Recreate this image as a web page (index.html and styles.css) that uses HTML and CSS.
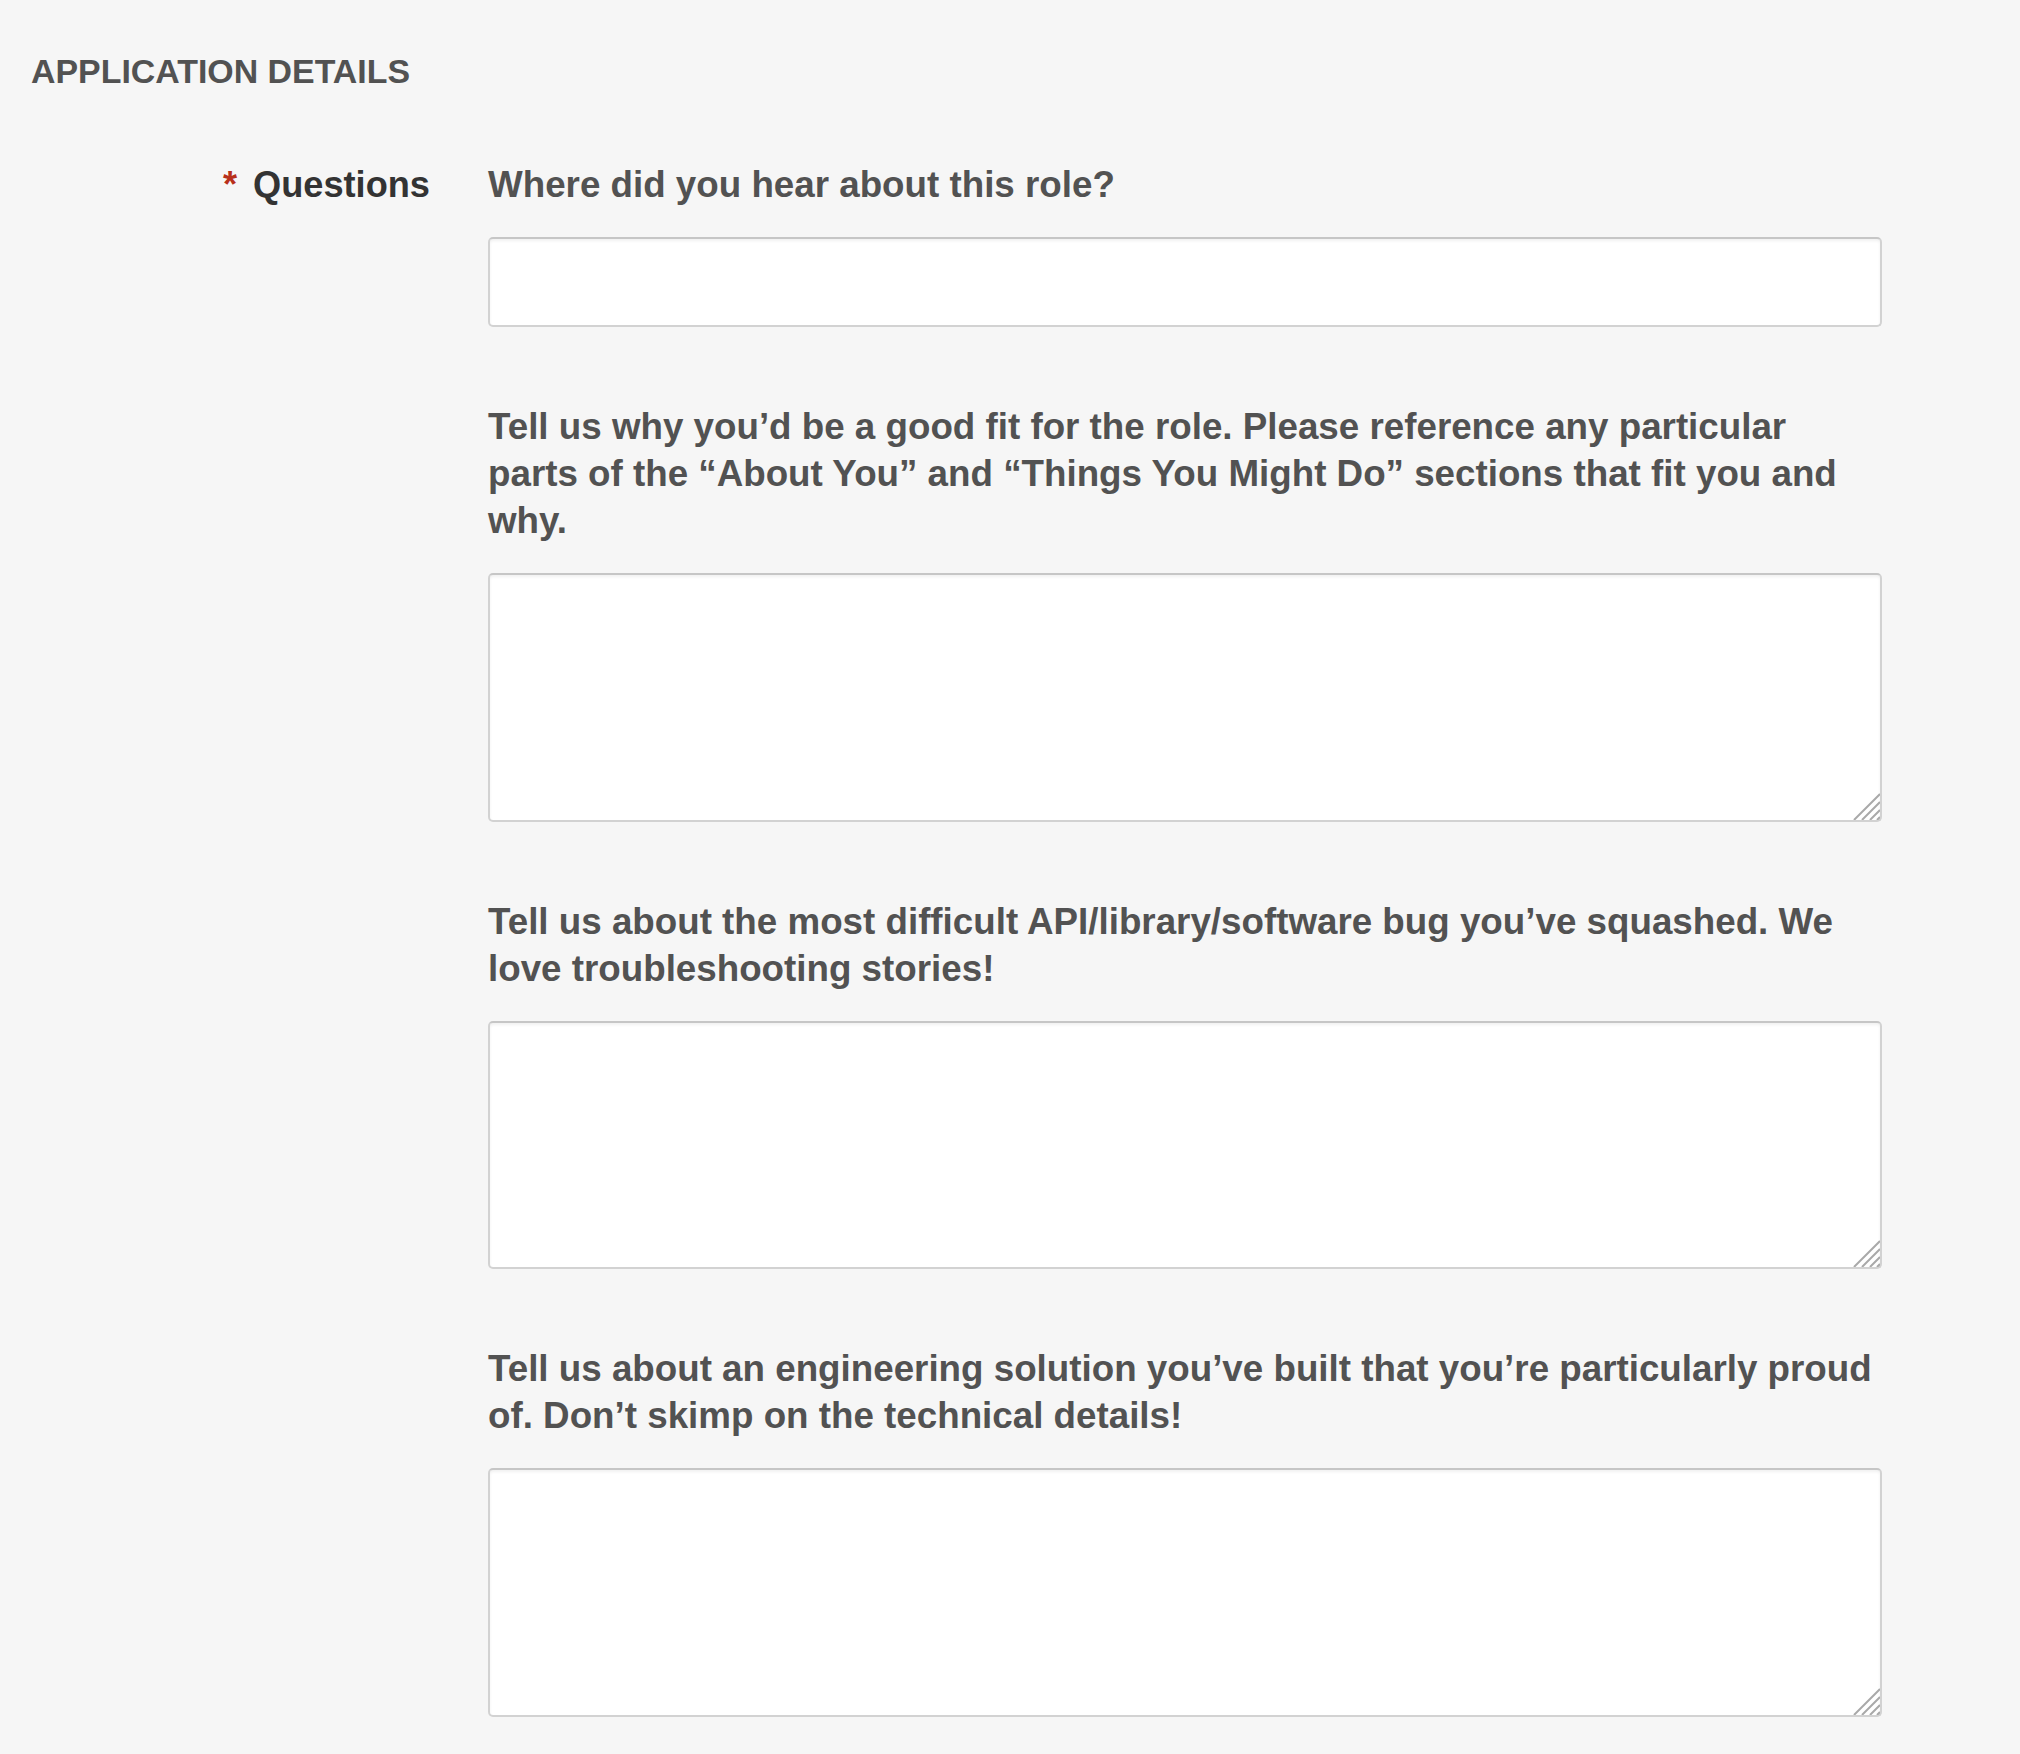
FILE: index.html
```html
<!DOCTYPE html>
<html lang="en">
<head>
    <meta charset="UTF-8">
    <title>Application Details</title>
    <link rel="stylesheet" href="styles.css">
</head>
<body>
    <section class="application">
        <h2 class="section-title">APPLICATION DETAILS</h2>

        <div class="field-row">
            <label class="field-label"><span class="required">*</span>Questions</label>

            <div class="questions">
                <div class="question">
                    <p class="question-text">Where did you hear about this role?</p>
                    <input class="text-input" type="text">
                </div>

                <div class="question">
                    <p class="question-text">Tell us why you’d be a good fit for the role. Please reference any particular<br>parts of the “About You” and “Things You Might Do” sections that fit you and<br>why.</p>
                    <div class="textarea-wrap">
                        <textarea class="text-area"></textarea>
                        <svg class="grip" width="30" height="30" viewBox="0 0 30 30"><path d="M30 4 L4 30 M30 12 L12 30 M30 20 L20 30 M30 27 L27 30"/></svg>
                    </div>
                </div>

                <div class="question">
                    <p class="question-text">Tell us about the most difficult API/library/software bug you’ve squashed. We<br>love troubleshooting stories!</p>
                    <div class="textarea-wrap">
                        <textarea class="text-area"></textarea>
                        <svg class="grip" width="30" height="30" viewBox="0 0 30 30"><path d="M30 4 L4 30 M30 12 L12 30 M30 20 L20 30 M30 27 L27 30"/></svg>
                    </div>
                </div>

                <div class="question">
                    <p class="question-text">Tell us about an engineering solution you’ve built that you’re particularly proud<br>of. Don’t skimp on the technical details!</p>
                    <div class="textarea-wrap">
                        <textarea class="text-area"></textarea>
                        <svg class="grip" width="30" height="30" viewBox="0 0 30 30"><path d="M30 4 L4 30 M30 12 L12 30 M30 20 L20 30 M30 27 L27 30"/></svg>
                    </div>
                </div>
            </div>
        </div>
    </section>
</body>
</html>
```

FILE: styles.css
```css
:root {
    --bg-color: #f6f6f6;
    --text-color: #525252;
    --label-color: #333;
    --required-color: #b8301a;
    --border-color: #d2d2d2;
}

* {
    margin: 0;
    padding: 0;
    box-sizing: border-box;
}

body {
    font-family: "Liberation Sans", Arial, Helvetica, sans-serif;
    background-color: var(--bg-color);
    color: var(--text-color);
    width: 2020px;
    min-height: 1754px;
}

.application {
    padding: 51px 0 0 31px;
}

.section-title {
    font-size: 33.9px;
    line-height: 40px;
    font-weight: bold;
    color: var(--text-color);
    margin-bottom: 70px;
}

.field-row {
    display: grid;
    grid-template-columns: 399px 1394px;
    column-gap: 58px;
    align-items: start;
}

.field-label {
    text-align: right;
    font-size: 36.2px;
    line-height: 47px;
    font-weight: bold;
    color: var(--label-color);
}

.required {
    color: var(--required-color);
    margin-right: 16px;
}

.questions {
    display: flex;
    flex-direction: column;
    gap: 76px;
}

.question-text {
    font-size: 36.75px;
    line-height: 47px;
    font-weight: bold;
    white-space: nowrap;
    margin-bottom: 29px;
}

.text-input,
.text-area {
    display: block;
    width: 100%;
    background: white;
    border: 2px solid var(--border-color);
    border-top-color: #c6c6c6;
    border-radius: 5px;
    box-shadow: inset 0 2px 3px rgba(0,0,0,0.06);
    font-family: inherit;
    font-size: 28px;
    outline: none;
}

.text-input {
    height: 90px;
}

.textarea-wrap {
    position: relative;
}

.text-area {
    height: 248.5px;
    resize: none;
}

/* 右下角拖拽手柄 */
.grip {
    position: absolute;
    right: 2px;
    bottom: 2px;
}

.grip path {
    stroke: #a9a9a9;
    stroke-width: 2;
    fill: none;
}
```
